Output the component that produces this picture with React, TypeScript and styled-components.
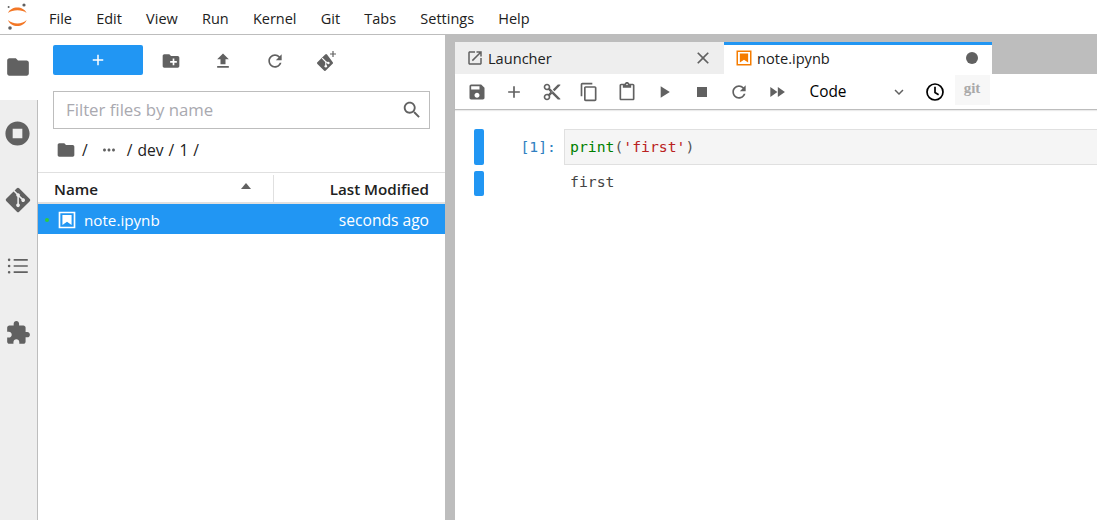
import React from "react";
import styled, { createGlobalStyle } from "styled-components";
import { FaGitAlt } from "react-icons/fa";

const Global = createGlobalStyle`
  html, body { margin: 0; padding: 0; height: 100%; background: #fff; overflow: hidden; }
  #root { height: 520px; width: 1097px; }
  * { box-sizing: border-box; }
`;

const UI = `"Open Sans", "Noto Sans", sans-serif`;
const MONO = `"DejaVu Sans Mono", monospace`;
const GREY = "#616161";

const P = {
  folder: "M10 4H4c-1.1 0-1.99.9-1.99 2L2 18c0 1.1.9 2 2 2h16c1.1 0 2-.9 2-2V8c0-1.1-.9-2-2-2h-8l-2-2z",
  stopCircle: "M12 2C6.48 2 2 6.48 2 12s4.48 10 10 10 10-4.48 10-10S17.52 2 12 2zM8 8h8v8H8z",
  list: "M8 5.5h13v1.6H8zM8 11.2h13v1.6H8zM8 16.9h13v1.6H8zM5 6.3a1.2 1.2 0 1 1-2.4 0 1.2 1.2 0 0 1 2.4 0zM5 12a1.2 1.2 0 1 1-2.4 0 1.2 1.2 0 0 1 2.4 0zM5 17.7a1.2 1.2 0 1 1-2.4 0 1.2 1.2 0 0 1 2.4 0z",
  puzzle: "M20.5 11H19V7c0-1.1-.9-2-2-2h-4V3.5C13 2.12 11.88 1 10.5 1S8 2.12 8 3.5V5H4c-1.1 0-1.99.9-1.99 2v3.8H3.5c1.49 0 2.7 1.21 2.7 2.7s-1.21 2.7-2.7 2.7H2V20c0 1.1.9 2 2 2h3.8v-1.5c0-1.49 1.21-2.7 2.7-2.7 1.49 0 2.7 1.21 2.7 2.7V22H17c1.1 0 2-.9 2-2v-4h1.5c1.38 0 2.5-1.12 2.5-2.5S21.88 11 20.5 11z",
  newFolder: "M20 6h-8l-2-2H4c-1.11 0-1.99.89-1.99 2L2 18c0 1.11.89 2 2 2h16c1.11 0 2-.89 2-2V8c0-1.11-.89-2-2-2zm-1 8h-3v3h-2v-3h-3v-2h3V9h2v3h3v2z",
  upload: "M9 16h6v-6h4l-7-7-7 7h4zm-4 2h14v2H5z",
  refresh: "M17.65 6.35C16.2 4.9 14.21 4 12 4c-4.42 0-7.99 3.58-7.99 8s3.57 8 7.99 8c3.73 0 6.84-2.55 7.73-6h-2.08c-.82 2.33-3.04 4-5.65 4-3.31 0-6-2.69-6-6s2.69-6 6-6c1.66 0 3.14.69 4.22 1.78L13 11h7V4l-2.35 2.35z",
  search: "M15.5 14h-.79l-.28-.27C15.41 12.59 16 11.11 16 9.5 16 5.91 13.09 3 9.5 3S3 5.91 3 9.5 5.91 16 9.5 16c1.61 0 3.09-.59 4.23-1.57l.27.28v.79l5 4.99L20.49 19l-4.99-5zm-6 0C7.01 14 5 11.99 5 9.5S7.01 5 9.5 5 14 7.01 14 9.5 11.99 14 9.5 14z",
  launch: "M19 19H5V5h7V3H5c-1.11 0-2 .9-2 2v14c0 1.1.89 2 2 2h14c1.1 0 2-.9 2-2v-7h-2v7zM14 3v2h3.59l-9.83 9.83 1.41 1.41L19 6.41V10h2V3h-7z",
  close: "M19 6.41L17.59 5 12 10.59 6.41 5 5 6.41 10.59 12 5 17.59 6.41 19 12 13.41 17.59 19 19 17.59 13.41 12z",
  save: "M17 3H5c-1.11 0-2 .9-2 2v14c0 1.1.89 2 2 2h14c1.1 0 2-.9 2-2V7l-4-4zm-5 16c-1.66 0-3-1.34-3-3s1.34-3 3-3 3 1.34 3 3-1.34 3-3 3zm3-10H5V5h10v4z",
  add: "M19 13h-6v6h-2v-6H5v-2h6V5h2v6h6v2z",
  cut: "M9.64 7.64c.23-.5.36-1.05.36-1.64 0-2.21-1.79-4-4-4S2 3.79 2 6s1.79 4 4 4c.59 0 1.14-.13 1.64-.36L10 12l-2.36 2.36C7.14 14.13 6.59 14 6 14c-2.21 0-4 1.79-4 4s1.79 4 4 4 4-1.79 4-4c0-.59-.13-1.14-.36-1.64L12 14l7 7h3v-1L9.64 7.64zM6 8c-1.1 0-2-.89-2-2s.9-2 2-2 2 .89 2 2-.9 2-2 2zm0 12c-1.1 0-2-.89-2-2s.9-2 2-2 2 .89 2 2-.9 2-2 2zm6-7.5c-.28 0-.5-.22-.5-.5s.22-.5.5-.5.5.22.5.5-.22.5-.5.5zM19 3l-6 6 2 2 7-7V3z",
  copy: "M16 1H4c-1.1 0-2 .9-2 2v14h2V3h12V1zm3 4H8c-1.1 0-2 .9-2 2v14c0 1.1.9 2 2 2h11c1.1 0 2-.9 2-2V7c0-1.1-.9-2-2-2zm0 16H8V7h11v14z",
  paste: "M19 2h-4.18C14.4.84 13.3 0 12 0c-1.3 0-2.4.84-2.82 2H5c-1.1 0-2 .9-2 2v16c0 1.1.9 2 2 2h14c1.1 0 2-.9 2-2V4c0-1.1-.9-2-2-2zm-7 0c.55 0 1 .45 1 1s-.45 1-1 1-1-.45-1-1 .45-1 1-1zm7 18H5V4h2v3h10V4h2v16z",
  run: "M8 5v14l11-7z",
  stop: "M6 6h12v12H6z",
  forward: "M4 18l8.5-6L4 6v12zm9-12v12l8.5-6L13 6z",
  chevron: "M16.59 8.59L12 13.17 7.41 8.59 6 10l6 6 6-6z",
  more: "M6 10c-1.1 0-2 .9-2 2s.9 2 2 2 2-.9 2-2-.9-2-2-2zm12 0c-1.1 0-2 .9-2 2s.9 2 2 2 2-.9 2-2-.9-2-2-2zm-6 0c-1.1 0-2 .9-2 2s.9 2 2 2 2-.9 2-2-.9-2-2-2z",
  notebook: "M2 2h20v20H2zM4 4v16h16V4zM6.5 6h11v12L12 14.2 6.5 18z",
};

const Icon = ({ d, size = 20, color = GREY }: { d: string; size?: number; color?: string }) => (
  <svg width={size} height={size} viewBox="0 0 24 24" fill={color} fillRule="evenodd" style={{ display: "block", flex: "none" }}>
    <path d={d} />
  </svg>
);

const Logo = () => (
  <svg width="22" height="30" viewBox="0 0 22 30" style={{ display: "block" }}>
    <path d="M1 11C4 3.6 16.5 3.6 19.6 11C15.5 7.4 5.5 7.4 1 11Z" fill="#f37726" />
    <path d="M1 18C5.5 22.6 15.5 22.6 19.6 18C16.5 26 4 26 1 18Z" fill="#f37726" />
    <circle cx="17" cy="3" r="1.6" fill="#616161" />
    <circle cx="1.6" cy="5" r="1" fill="#616161" />
    <circle cx="3" cy="26" r="1.8" fill="#616161" />
  </svg>
);

const GitPlus = () => (
  <svg width="20" height="20" viewBox="0 0 20 20" style={{ display: "block" }}>
    <g transform="translate(0 3)">
      <path d="M8.2.4.4 8.2a1.3 1.3 0 0 0 0 1.8l6.6 6.6a1.3 1.3 0 0 0 1.8 0l6.8-6.8a1.3 1.3 0 0 0 0-1.8L10 .4a1.3 1.3 0 0 0-1.8 0z" fill={GREY} />
      <path d="M5.2 4.2l3.6 3.6v4.2M8.8 7.8l2.6 1.2" stroke="#fff" strokeWidth="1.2" fill="none" />
      <circle cx="8.8" cy="12.2" r="1.3" fill="#fff" />
      <circle cx="11.4" cy="9" r="1.2" fill="#fff" />
    </g>
    <path d="M15.4 0h1.2v2.4H19v1.2h-2.4V6h-1.2V3.6H13V2.4h2.4z" fill={GREY} />
  </svg>
);

const Clock = () => (
  <svg width="20" height="20" viewBox="0 0 20 20" style={{ display: "block" }}>
    <circle cx="10" cy="10" r="8" fill="none" stroke="#000" strokeWidth="1.7" />
    <path d="M10 4.8V10.6L13.6 12.8" fill="none" stroke="#000" strokeWidth="1.7" />
  </svg>
);

const Shell = styled.div`
  width: 1097px;
  height: 520px;
  display: flex;
  flex-direction: column;
  font-family: ${UI};
  color: #212121;
  overflow: hidden;
`;

const MenuBar = styled.header`
  height: 35px;
  flex: none;
  display: flex;
  align-items: center;
  border-bottom: 1px solid #bdbdbd;
`;

const LogoBox = styled.div`
  width: 36px;
  padding-left: 7px;
  flex: none;
`;

const MenuList = styled.nav`
  display: flex;
  padding-left: 13px;
  gap: 24.2px;
  font-size: 14.5px;
  margin-top: 2px;
`;

const Body = styled.div`
  flex: 1;
  min-height: 0;
  display: flex;
`;

const Rail = styled.aside`
  width: 38px;
  flex: none;
  display: flex;
  flex-direction: column;
  background: #eee;
  border-right: 1px solid #bdbdbd;
`;

const RailTab = styled.div<{ $active?: boolean }>`
  height: ${(p) => (p.$active ? 65 : 66.5)}px;
  flex: none;
  display: flex;
  align-items: center;
  justify-content: center;
  padding-right: 2px;
  ${(p) => (p.$active ? "background:#fff;margin-right:-1px;padding:0 3px 1px 0;" : "")}
`;

const FilePanel = styled.section`
  width: 407px;
  flex: none;
  display: flex;
  flex-direction: column;
  background: #fff;
`;

const FileToolbar = styled.div`
  height: 40px;
  margin-top: 10px;
  padding-left: 15px;
  display: flex;
  align-items: flex-start;
`;

const NewButton = styled.div`
  width: 90px;
  height: 30px;
  background: #2196f3;
  border-radius: 2px;
  display: flex;
  align-items: center;
  justify-content: center;
  margin-right: 2px;
`;

const ToolButton = styled.div`
  width: 52px;
  height: 32px;
  display: flex;
  align-items: center;
  justify-content: center;
`;

const FilterBox = styled.div`
  margin: 6px 15px 0;
  height: 38px;
  border: 1.5px solid #bdbdbd;
  display: flex;
  align-items: center;
  justify-content: space-between;
  padding: 0 6px 1px 12px;
  font-size: 16.8px;
  color: #a9a9b0;
`;

const Crumbs = styled.div`
  height: 43px;
  padding: 0 0 2px 18px;
  display: flex;
  align-items: center;
  font-size: 15.6px;
  word-spacing: 1px;
  color: #212121;
`;

const CrumbText = styled.span`
  margin-left: 6px;
  white-space: pre;
`;

const CrumbMore = styled.span`
  margin: 0 3px 0 12px;
  display: flex;
`;

const HeaderRow = styled.div`
  height: 32px;
  flex: none;
  display: flex;
  padding-top: 2px;
  border-top: 1px solid #e0e0e0;
  border-bottom: 2px solid #e0e0e0;
  font-size: 15.2px;
  font-weight: 600;
`;

const NameCol = styled.div`
  width: 236px;
  padding: 0 0 0 16px;
  display: flex;
  align-items: center;
  justify-content: space-between;
  border-right: 1px solid #e0e0e0;
`;

const Caret = styled.div`
  width: 0;
  height: 0;
  margin: 0 22px 5px 0;
  border-left: 5.5px solid transparent;
  border-right: 5.5px solid transparent;
  border-bottom: 6px solid ${GREY};
`;

const ModCol = styled.div`
  flex: 1;
  padding-right: 16px;
  display: flex;
  align-items: center;
  justify-content: flex-end;
`;

const FileRow = styled.div`
  height: 30px;
  flex: none;
  display: flex;
  align-items: center;
  padding-top: 1px;
  background: #2196f3;
  color: #fff;
  font-size: 15.2px;
`;

const RunDot = styled.span`
  width: 4px;
  height: 4px;
  margin-left: 7px;
  border-radius: 50%;
  background: #2ecc40;
`;

const FileIconBox = styled.span`
  margin-left: 8px;
`;

const FileName = styled.span`
  margin-left: 7px;
  flex: 1;
`;

const FileTime = styled.span`
  padding-right: 16px;
  font-size: 15.6px;
`;

const Splitter = styled.div`
  width: 10px;
  flex: none;
  background: #bdbdbd;
`;

const Main = styled.main`
  flex: 1;
  min-width: 0;
  display: flex;
  flex-direction: column;
  background: #fff;
`;

const TabBar = styled.div`
  height: 39px;
  flex: none;
  padding-top: 7px;
  display: flex;
  background: #bdbdbd;
`;

const Tab = styled.div<{ $active?: boolean }>`
  width: ${(p) => (p.$active ? 268 : 269)}px;
  flex: none;
  display: flex;
  align-items: center;
  font-size: 14.6px;
  padding: 0 0 ${(p) => (p.$active ? 3 : 0)}px 11px;
  background: ${(p) => (p.$active ? "#fff" : "#eee")};
  border-top: ${(p) => (p.$active ? "3px solid #2196f3" : "0")};
`;

const TabLabel = styled.span`
  margin-left: 4px;
  flex: 1;
`;

const TabEnd = styled.span`
  display: flex;
  margin-right: 11px;
`;

const Dirty = styled.span`
  width: 12px;
  height: 12px;
  border-radius: 50%;
  background: ${GREY};
  margin-right: 14px;
`;

const NbToolbar = styled.div`
  height: 36px;
  flex: none;
  padding-left: 9px;
  display: flex;
  align-items: center;
  border-bottom: 1px solid #bdbdbd;
  box-shadow: 0 1px 1px rgba(0, 0, 0, 0.08);
`;

const NbButton = styled.div`
  width: 25px;
  margin-right: 12.5px;
  display: flex;
  justify-content: center;
`;

const KernelSelect = styled.div`
  width: 111px;
  margin-left: 3px;
  padding: 0 8px 0 5px;
  display: flex;
  align-items: center;
  justify-content: space-between;
  font-size: 15.4px;
  color: #000;
`;

const ClockBox = styled.div`
  margin-left: 9px;
  width: 20px;
`;

const GitBox = styled.div`
  margin-left: 10px;
  width: 35px;
  height: 30px;
  margin-top: -3px;
  background: #f7f7f7;
  display: flex;
  align-items: center;
  justify-content: center;
  font-family: "Liberation Serif", serif;
  font-weight: 700;
  font-size: 15px;
  color: #a9a9a9;
  padding-bottom: 3px;
`;

const NbContent = styled.div`
  flex: 1;
  padding: 19px 0 0 19px;
  display: flex;
  flex-direction: column;
  gap: 6px;
  font-family: ${MONO};
  font-size: 14.75px;
`;

const CellRow = styled.div`
  display: flex;
`;

const Collapser = styled.div<{ $h: number }>`
  width: 10px;
  height: ${(p) => p.$h}px;
  flex: none;
  border-radius: 2px;
  background: #2196f3;
`;

const Prompt = styled.div`
  width: 80px;
  flex: none;
  text-align: right;
  padding: 9px 8px 0 0;
  color: #307fc1;
`;

const InputArea = styled.div`
  flex: 1;
  height: 36px;
  background: #f5f5f5;
  border: 1px solid #e0e0e0;
  border-right: 0;
  display: flex;
  align-items: center;
  padding: 0 0 2px 5px;
  white-space: pre;
  color: #555;
`;

const Kw = styled.span`
  color: #008000;
`;

const Str = styled.span`
  color: #ba2121;
`;

const Output = styled.div`
  padding-left: 86px;
  color: #444;
  line-height: 21px;
  height: 26px;
`;

const menu = ["File", "Edit", "View", "Run", "Kernel", "Git", "Tabs", "Settings", "Help"];
const nb = [P.save, P.add, P.cut, P.copy, P.paste, P.run, P.stop, P.refresh, P.forward];

export default function App() {
  return (
    <Shell>
      <Global />
      <MenuBar>
        <LogoBox><Logo /></LogoBox>
        <MenuList>{menu.map((m) => <span key={m}>{m}</span>)}</MenuList>
      </MenuBar>
      <Body>
        <Rail>
          <RailTab $active><Icon d={P.folder} size={26} /></RailTab>
          <RailTab><Icon d={P.stopCircle} size={29} /></RailTab>
          <RailTab><FaGitAlt size={28} color={GREY} /></RailTab>
          <RailTab><Icon d={P.list} size={26} /></RailTab>
          <RailTab><Icon d={P.puzzle} size={26} /></RailTab>
        </Rail>
        <FilePanel>
          <FileToolbar>
            <NewButton><Icon d={P.add} size={18} color="#fff" /></NewButton>
            <ToolButton><Icon d={P.newFolder} /></ToolButton>
            <ToolButton><Icon d={P.upload} /></ToolButton>
            <ToolButton><Icon d={P.refresh} /></ToolButton>
            <ToolButton><GitPlus /></ToolButton>
          </FileToolbar>
          <FilterBox>
            <span>Filter files by name</span>
            <Icon d={P.search} size={22} />
          </FilterBox>
          <Crumbs>
            <Icon d={P.folder} size={20} />
            <CrumbText>/</CrumbText>
            <CrumbMore><Icon d={P.more} size={18} /></CrumbMore>
            <CrumbText>/ dev / 1 /</CrumbText>
          </Crumbs>
          <HeaderRow>
            <NameCol>Name<Caret /></NameCol>
            <ModCol>Last Modified</ModCol>
          </HeaderRow>
          <FileRow>
            <RunDot />
            <FileIconBox><Icon d={P.notebook} size={20} color="#fff" /></FileIconBox>
            <FileName>note.ipynb</FileName>
            <FileTime>seconds ago</FileTime>
          </FileRow>
        </FilePanel>
        <Splitter />
        <Main>
          <TabBar>
            <Tab>
              <Icon d={P.launch} size={18} />
              <TabLabel>Launcher</TabLabel>
              <TabEnd><Icon d={P.close} size={20} /></TabEnd>
            </Tab>
            <Tab $active>
              <Icon d={P.notebook} size={18} color="#f57c00" />
              <TabLabel>note.ipynb</TabLabel>
              <Dirty />
            </Tab>
          </TabBar>
          <NbToolbar>
            {nb.map((d) => <NbButton key={d}><Icon d={d} size={20} /></NbButton>)}
            <KernelSelect>Code<Icon d={P.chevron} size={18} /></KernelSelect>
            <ClockBox><Clock /></ClockBox>
            <GitBox>git</GitBox>
          </NbToolbar>
          <NbContent>
            <CellRow>
              <Collapser $h={36} />
              <Prompt>[1]:</Prompt>
              <InputArea><Kw>print</Kw>(<Str>'first'</Str>)</InputArea>
            </CellRow>
            <CellRow>
              <Collapser $h={25} />
              <Output>first</Output>
            </CellRow>
          </NbContent>
        </Main>
      </Body>
    </Shell>
  );
}
